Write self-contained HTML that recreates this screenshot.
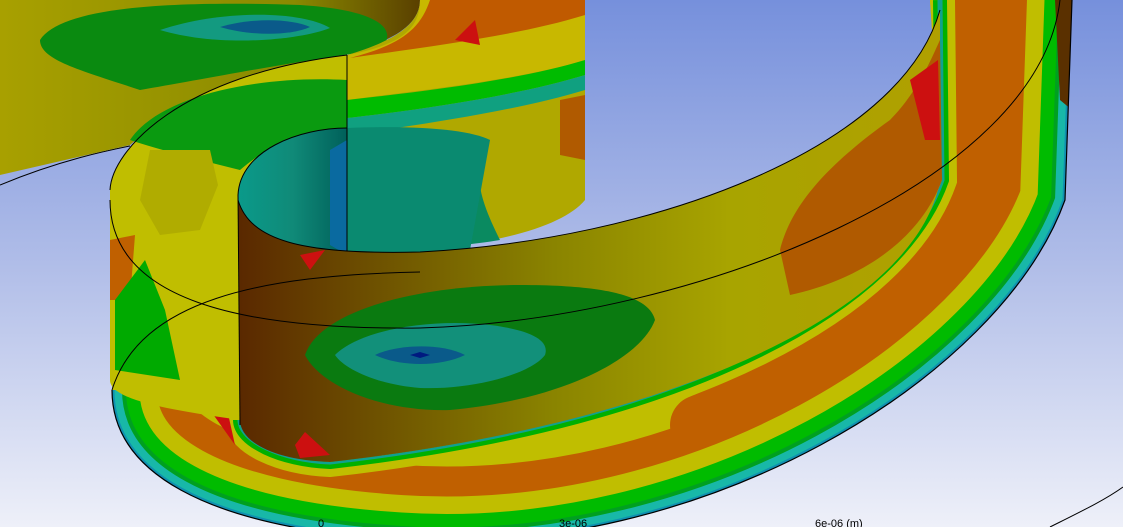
<!DOCTYPE html>
<html><head><meta charset="utf-8"><style>
html,body{margin:0;padding:0;width:1123px;height:527px;overflow:hidden;font-family:"Liberation Sans",sans-serif}
</style></head><body>
<svg width="1123" height="527" viewBox="0 0 1123 527" xmlns="http://www.w3.org/2000/svg">
<defs>
<linearGradient id="bg" x1="0" y1="0" x2="0" y2="1">
<stop offset="0" stop-color="#7690dc"/><stop offset="0.5" stop-color="#b0bde8"/><stop offset="1" stop-color="#eef0f9"/></linearGradient>
<linearGradient id="rib" x1="0" y1="0" x2="1" y2="0">
<stop offset="0" stop-color="#5a2800"/><stop offset="0.2" stop-color="#6e5200"/><stop offset="0.45" stop-color="#8a8400"/><stop offset="0.7" stop-color="#a8a400"/><stop offset="1" stop-color="#b0a000"/></linearGradient>
<linearGradient id="cyl" x1="0" y1="0" x2="1" y2="0">
<stop offset="0" stop-color="#0a9a8a"/><stop offset="0.5" stop-color="#108a78"/><stop offset="1" stop-color="#00605a"/></linearGradient>
<linearGradient id="tl" x1="0" y1="0" x2="1" y2="0">
<stop offset="0" stop-color="#a8a000"/><stop offset="0.7" stop-color="#8a8a00"/><stop offset="1" stop-color="#5a4000"/></linearGradient>
<clipPath id="ringclip"><path d="M112,390 C112,470 200,527 400,540 C700,560 1000,380 1065,200 L1072,0 L930,0 L942,180 C900,300 700,420 330,462 C280,460 240,440 240,420 L240,280 C170,300 112,350 112,390Z"/></clipPath>
</defs>
<rect width="1123" height="527" fill="url(#bg)"/>
<path d="M0,185 C60,160 110,150 130,146" stroke="#000" fill="none"/>
<path d="M1050,527 C1080,512 1105,500 1123,487" stroke="#000" fill="none"/>
<!-- top-left band -->
<path d="M0,0 L420,0 C420,30 380,45 340,55 C250,70 170,110 130,145 L0,175 Z" fill="url(#tl)"/>
<path d="M40,40 C60,10 150,0 300,5 C380,10 400,30 380,50 C300,60 200,80 140,90 C80,70 40,60 40,40Z" fill="#0a8a10"/>
<path d="M160,30 C220,10 300,10 330,28 C300,40 220,48 160,30Z" fill="#139a80"/>
<path d="M220,27 C250,18 290,18 310,27 C290,36 250,36 220,27Z" fill="#0a5a8a"/>
<!-- top cylinder area -->
<path d="M420,0 L585,0 L585,200 C560,230 480,250 347,255 L347,55 C380,45 420,30 420,0Z" fill="#b0a800"/>
<path d="M420,0 L585,0 L585,60 C520,80 420,90 347,100 L347,55 C400,45 420,30 420,0Z" fill="#c8b800"/>
<path d="M430,0 L585,0 L585,15 C520,35 440,45 350,58 C400,45 420,30 430,0Z" fill="#c05a00"/>
<path d="M455,40 L475,20 L480,45Z" fill="#cc1010"/>
<path d="M347,100 C420,92 520,80 585,60 L585,75 C520,95 420,110 347,118Z" fill="#00bb00"/>
<path d="M347,118 C420,110 520,95 585,75 L585,90 C520,110 420,125 347,135Z" fill="#10a080"/>
<path d="M347,135 L347,255 C420,250 470,245 500,240 C480,200 470,170 490,140 C450,130 400,130 347,135Z" fill="#0a8a60"/>
<path d="M560,100 L585,95 L585,160 L560,155Z" fill="#b05a00"/>
<!-- ring floor -->
<g clip-path="url(#ringclip)">
<rect width="1123" height="527" fill="#c0be00"/>
<path d="M112,390 C112,470 200,527 400,540 C700,560 1000,380 1065,200 L1072,0" fill="none" stroke="#c06000" stroke-width="150"/>
<path d="M985,-10 L985,170 C965,260 880,350 700,425" fill="none" stroke="#c06000" stroke-width="60" stroke-linecap="round"/>
<path d="M112,390 C112,470 200,527 400,540 C700,560 1000,380 1065,200 L1072,0" fill="none" stroke="#c0be00" stroke-width="90"/>
<path d="M112,390 C112,470 200,527 400,540 C700,560 1000,380 1065,200 L1072,0" fill="none" stroke="#00bb00" stroke-width="55"/>
<path d="M112,390 C112,470 200,527 400,540 C700,560 1000,380 1065,200 L1072,0" fill="none" stroke="#00a020" stroke-width="28"/>
<path d="M112,390 C112,470 200,527 400,540 C700,560 1000,380 1065,200 L1072,0" fill="none" stroke="#18b8a8" stroke-width="20"/>
<path d="M112,390 C112,470 200,527 400,540 C700,560 1000,380 1065,200 L1072,0" fill="none" stroke="#1090b0" stroke-width="5"/>
<path d="M940,0 L942,180 C900,300 700,420 330,462 C280,460 240,440 240,420" fill="none" stroke="#c0be00" stroke-width="30"/>
<path d="M940,0 L942,180 C900,300 700,420 330,462 C280,460 240,440 240,420" fill="none" stroke="#00b000" stroke-width="14"/>
<path d="M940,0 L942,180 C900,300 700,420 330,462 C280,460 240,440 240,420" fill="none" stroke="#10a090" stroke-width="5"/>
<path d="M210,410 L235,445 L225,400Z" fill="#cc1010"/>
<path d="M1055,0 L1072,0 L1072,110 L1060,100Z" fill="#5a3000"/>
</g>
<path d="M112,390 C112,470 200,527 400,540 C700,560 1000,380 1065,200 L1072,0" fill="none" stroke="#000" stroke-width="1.2"/>
<!-- left cylinder -->
<path d="M110,190 C112,150 180,75 347,55 L347,128 C300,128 240,150 238,195 L240,420 C170,410 110,400 110,380Z" fill="#c0be00"/>
<path d="M130,140 C160,95 260,75 347,80 L347,128 C300,128 270,145 240,170 C200,160 160,150 130,140Z" fill="#0a9a10"/>
<path d="M110,240 L135,235 L130,300 L110,300Z" fill="#c06000"/>
<path d="M115,300 L145,260 L165,310 L180,380 L115,370Z" fill="#00aa00"/>
<path d="M150,150 L210,150 L218,185 L200,230 L160,235 L140,200Z" fill="#b0ac00"/>
<path d="M110,190 C112,150 180,75 347,55" stroke="#000" fill="none"/>
<!-- inner cylinder face -->
<path d="M238,195 C240,150 300,128 347,128 L347,258 L300,255 L240,250Z" fill="url(#cyl)"/>
<path d="M347,128 C420,125 470,130 490,140 L470,250 L347,258Z" fill="#0a8a70"/>
<path d="M330,150 L347,140 L347,255 L330,245Z" fill="#0a6aa0"/>
<path d="M238,195 C240,150 300,128 347,128" stroke="#000" fill="none"/>
<line x1="347" y1="55" x2="347" y2="258" stroke="#000"/>
<!-- front ribbon -->
<path d="M238,200 C250,240 300,255 420,252 C650,240 900,150 940,10 L940,180 C920,300 700,420 330,462 C270,460 240,440 240,420Z" fill="url(#rib)"/>
<path d="M780,250 C790,210 820,170 890,120 C920,90 935,50 940,40 L942,180 C920,240 860,280 790,295Z" fill="#b05a00"/>
<path d="M910,80 L938,60 L940,140 L925,140Z" fill="#cc1010"/>
<path d="M305,355 C320,310 420,285 520,285 C620,285 650,300 655,320 C640,360 560,400 450,410 C380,412 320,385 305,355Z" fill="#0a7a10"/>
<path d="M335,355 C360,330 430,318 490,325 C530,330 550,340 545,355 C530,375 470,390 420,388 C380,385 345,370 335,355Z" fill="#12907a"/>
<path d="M375,355 C395,345 440,342 465,355 C440,367 400,367 375,355Z" fill="#0a5a8a"/>
<path d="M410,355 L420,352 L430,355 L420,358Z" fill="#001a80"/>
<path d="M295,445 L305,432 L330,455 L300,458Z" fill="#cc1010"/>
<path d="M300,255 L325,250 L310,270Z" fill="#cc1010"/>
<!-- outlines -->
<path d="M238,200 C250,240 300,255 420,252 C650,240 900,150 940,10" stroke="#000" fill="none"/>
<path d="M110,200 C110,300 240,330 420,328 C700,320 1040,180 1060,0" stroke="#000" fill="none"/>
<path d="M112,390 C140,300 260,275 420,272" stroke="#000" fill="none"/>
<line x1="238" y1="195" x2="240" y2="425" stroke="#000"/>
<!-- scale -->
<text x="318" y="527" font-size="11" fill="#000">0</text>
<text x="559" y="527" font-size="11" fill="#000">3e-06</text>
<text x="815" y="527" font-size="11" fill="#000">6e-06 (m)</text>
</svg>
</body></html>
